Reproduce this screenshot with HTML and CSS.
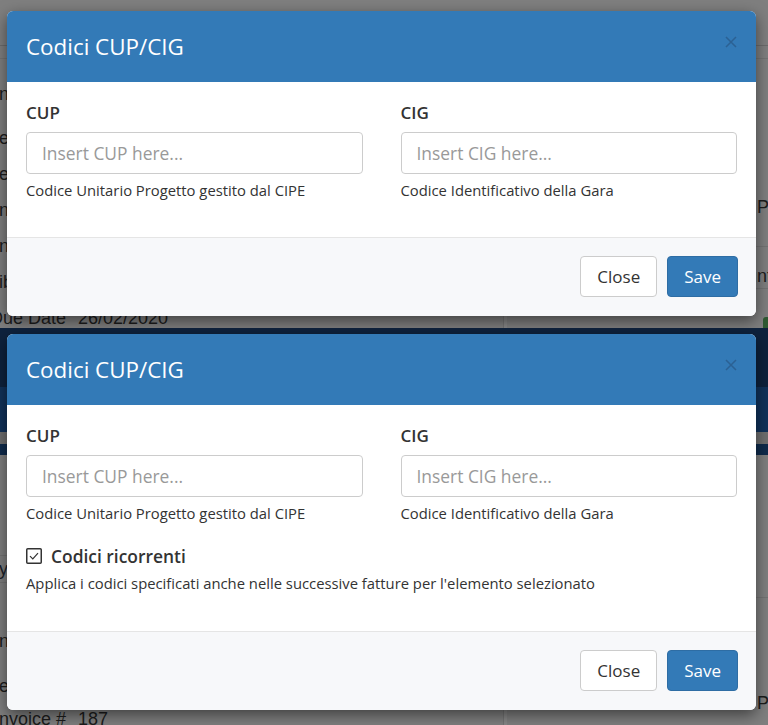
FILE: index.html
```html
<!DOCTYPE html>
<html lang="it">
<head>
    <meta charset="UTF-8">
    <meta name="viewport" content="width=device-width, initial-scale=1.0">
    <title>Codici CUP/CIG</title>
    <link rel="stylesheet" href="styles.css">
</head>
<body>
    <!-- Prima schermata: solo CUP / CIG -->
    <div class="screen screen-one">
        <div class="page">
            <div class="page-top"></div>
            <div class="page-sub"></div>
            <div class="page-cols">
                <div class="page-left">
                    <div class="spacer-17"></div>
                    <div class="row"><span class="cell-free">nome</span></div>
                    <div class="spacer-8"></div>
                    <div class="row"><span class="cell-free">email</span></div>
                    <div class="row"><span class="cell-free">extra</span></div>
                    <div class="row"><span class="cell-free">nessuno</span></div>
                    <div class="row"><span class="cell-free">numero</span></div>
                    <div class="row"><span class="cell-free">iban</span></div>
                    <div class="row"><span class="cell-label">Due Date</span><span class="cell-value">26/02/2020</span></div>
                </div>
                <div class="page-divider"></div>
                <div class="page-right">
                    <div class="right-title">Payment</div>
                    <div class="right-row">Amount</div>
                    <div class="right-btn"></div>
                </div>
            </div>
        </div>

        <div class="modal">
            <div class="modal-header">
                <h4 class="modal-title">Codici CUP/CIG</h4>
                <button class="close" type="button" aria-label="Close">
                    <svg width="12" height="12" viewBox="0 0 12 12"><path d="M1 1 L11 11 M11 1 L1 11" stroke="#2b6194" stroke-width="1.5" fill="none"/></svg>
                </button>
            </div>
            <div class="modal-body">
                <div class="form-row">
                    <div class="form-group">
                        <label class="form-label">CUP</label>
                        <input class="form-control" type="text" placeholder="Insert CUP here...">
                        <div class="help-block">Codice Unitario Progetto gestito dal CIPE</div>
                    </div>
                    <div class="form-group">
                        <label class="form-label">CIG</label>
                        <input class="form-control" type="text" placeholder="Insert CIG here...">
                        <div class="help-block">Codice Identificativo della Gara</div>
                    </div>
                </div>
            </div>
            <div class="modal-footer">
                <button class="btn btn-default" type="button">Close</button>
                <button class="btn btn-primary" type="button">Save</button>
            </div>
        </div>
    </div>

    <!-- Seconda schermata: con codici ricorrenti -->
    <div class="screen screen-two">
        <div class="page">
            <div class="nav-dark"></div>
            <div class="nav-mid"></div>
            <div class="nav-gap"></div>
            <div class="nav-low"></div>
            <div class="page-cols">
                <div class="page-left">
                    <div class="spacer-100"></div>
                    <div class="row row-lined"><span class="cell-free link">yes</span></div>
                    <div class="spacer-40"></div>
                    <div class="row"><span class="cell-free">note</span></div>
                    <div class="spacer-14"></div>
                    <div class="row"><span class="cell-free">email</span></div>
                    <div class="row row-short"><span class="cell-label">Invoice #</span><span class="cell-value">187</span></div>
                </div>
                <div class="page-divider"></div>
                <div class="page-right">
                    <div class="right-line"></div>
                    <div class="right-title right-title-low">Payment</div>
                </div>
            </div>
        </div>

        <div class="modal">
            <div class="modal-header">
                <h4 class="modal-title">Codici CUP/CIG</h4>
                <button class="close" type="button" aria-label="Close">
                    <svg width="12" height="12" viewBox="0 0 12 12"><path d="M1 1 L11 11 M11 1 L1 11" stroke="#2b6194" stroke-width="1.5" fill="none"/></svg>
                </button>
            </div>
            <div class="modal-body">
                <div class="form-row">
                    <div class="form-group">
                        <label class="form-label">CUP</label>
                        <input class="form-control" type="text" placeholder="Insert CUP here...">
                        <div class="help-block">Codice Unitario Progetto gestito dal CIPE</div>
                    </div>
                    <div class="form-group">
                        <label class="form-label">CIG</label>
                        <input class="form-control" type="text" placeholder="Insert CIG here...">
                        <div class="help-block">Codice Identificativo della Gara</div>
                    </div>
                </div>
                <div class="check-group">
                    <label class="check-label">
                        <span class="check-box">
                            <svg width="16" height="16" viewBox="0 0 16 16"><rect x="0.75" y="0.75" width="14.5" height="14.5" rx="1" fill="#fff" stroke="#333" stroke-width="1.5"/><path d="M4 8.2 L6.8 11 L12 5.2" fill="none" stroke="#333" stroke-width="1.2"/></svg>
                        </span>
                        Codici ricorrenti
                    </label>
                    <div class="help-block help-check">Applica i codici specificati anche nelle successive fatture per l'elemento selezionato</div>
                </div>
            </div>
            <div class="modal-footer">
                <button class="btn btn-default" type="button">Close</button>
                <button class="btn btn-primary" type="button">Save</button>
            </div>
        </div>
    </div>
</body>
</html>
```

FILE: styles.css
```css
body {
    margin: 0;
    font-family: 'Open Sans', 'Liberation Sans', sans-serif;
    color: #333;
}

/* sfondo oscurato della pagina */
.screen {
    position: relative;
    overflow: hidden;
    background-color: #7f7f7f;
}
.screen-one {
    height: 328px;
}
.screen-two {
    height: 397px;
}
.page {
    font-family: 'Liberation Sans', Arial, sans-serif;
    font-size: 18px;
    color: #1c1c1c;
}
.page-top {
    height: 45px;
    border-bottom: 1px solid #6c6c6c;
}
.page-sub {
    height: 12px;
    border-bottom: 1px solid #747474;
}
.page-cols {
    display: grid;
    grid-template-columns: 503px 4px 1fr;
}
.page-divider {
    border-left: 1px solid #737373;
    background-color: #878787;
}
.row {
    display: flex;
    height: 36px;
    line-height: 36px;
    white-space: nowrap;
}
.row-lined {
    height: 26px;
    line-height: 26px;
    border-top: 1px solid #737373;
    border-bottom: 1px solid #737373;
}
.row-short {
    height: 30px;
    line-height: 30px;
}
.cell-free {
    margin-left: -1px;
}
.cell-label {
    width: 66px;
    flex: none;
    display: flex;
    justify-content: flex-end;
    padding-right: 6px;
}
.cell-value {
    padding-left: 6px;
}
.link {
    color: #1a1f2a;
}
.spacer-17 { height: 17px; }
.spacer-8 { height: 8px; }
.spacer-100 { height: 100px; }
.spacer-40 { height: 40px; }
.spacer-14 { height: 9px; }

.page-right {
    padding-left: 250px;
    white-space: nowrap;
}
.right-title {
    margin-top: 134px;
    line-height: 28px;
}
.right-row {
    margin-top: 25px;
    margin-left: -47px;
    height: 41px;
    line-height: 58px;
    border-top: 1px solid #737373;
    border-bottom: 1px solid #737373;
}
.right-btn {
    margin-top: 28px;
    margin-left: 6px;
    height: 20px;
    background-color: #2f5a32;
    border-radius: 3px;
}
.right-line {
    margin-top: 142px;
    margin-left: -250px;
    border-top: 1px solid #737373;
}
.right-title-low {
    margin-top: 91px;
}
.nav-dark {
    height: 59px;
    background-color: #0e223d;
}
.nav-mid {
    height: 45px;
    background-color: #11325a;
}
.nav-gap {
    height: 12px;
    background-color: #6f6f6f;
}
.nav-low {
    height: 11px;
    background-color: #0f2b4c;
}

/* modale */
.modal {
    position: absolute;
    left: 7px;
    width: 749px;
    background-color: white;
    border-radius: 6px;
    box-shadow: 0 5px 15px rgba(0, 0, 0, 0.5);
    overflow: hidden;
}
.screen-one .modal {
    top: 11px;
}
.screen-two .modal {
    top: 6px;
}
.modal-header {
    display: flex;
    justify-content: space-between;
    align-items: flex-start;
    height: 71px;
    box-sizing: border-box;
    padding: 20px 19px;
    background-color: #337ab7;
}
.modal-title {
    margin: 0;
    color: white;
    font-size: 22.4px;
    font-weight: 400;
    line-height: 31px;
}
.close {
    margin-top: 5px;
    padding: 0;
    border: none;
    background: none;
    line-height: 0;
    cursor: pointer;
}
.modal-body {
    padding: 20px 19px 37px;
}
.form-row {
    display: grid;
    grid-template-columns: 1fr 1fr;
    column-gap: 38px;
}
.form-label {
    display: block;
    margin-bottom: 8px;
    font-size: 17px;
    font-weight: 600;
    line-height: 22px;
}
.form-control {
    display: block;
    width: 100%;
    height: 42px;
    box-sizing: border-box;
    padding: 0 15px;
    border: 1px solid #ccc;
    border-radius: 4px;
    font-family: inherit;
    font-size: 17.4px;
    color: #333;
}
.form-control::placeholder {
    color: #999;
}
.help-block {
    margin-top: 6px;
    font-size: 14.8px;
    line-height: 20px;
    color: #333;
}
.check-group {
    margin-top: 22px;
}
.check-label {
    display: flex;
    align-items: center;
    gap: 9px;
    font-size: 17.4px;
    font-weight: 600;
    line-height: 22px;
}
.check-box {
    display: flex;
    line-height: 0;
}
.help-check {
    margin-top: 6px;
}
.modal-body .check-group + * {
    margin-top: 0;
}
.modal-footer {
    display: flex;
    justify-content: flex-end;
    gap: 10px;
    padding: 18px 18px 19px;
    border-top: 1px solid #e5e5e5;
    background-color: #f7f8fa;
}
.screen-two .modal-body {
    padding-bottom: 38px;
}
.btn {
    height: 41px;
    padding: 0 16px;
    border: 1px solid #ccc;
    border-radius: 4px;
    font-family: inherit;
    font-size: 17px;
    cursor: pointer;
}
.btn-default {
    background-color: white;
    color: #333;
}
.btn-primary {
    background-color: #337ab7;
    border-color: #2e6da4;
    color: white;
}
```
